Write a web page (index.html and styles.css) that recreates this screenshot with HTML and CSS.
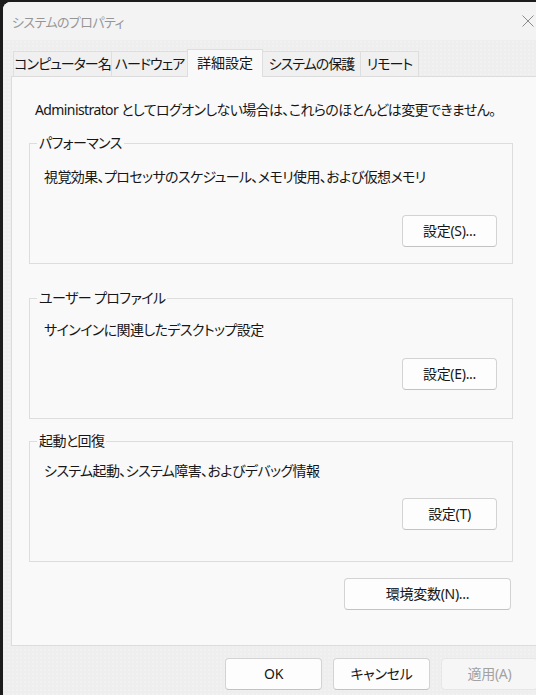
FILE: index.html
```html
<!DOCTYPE html>
<html lang="ja">
<head>
<meta charset="utf-8">
<title>システムのプロパティ</title>
<link rel="stylesheet" href="styles.css">
</head>
<body>
<div class="window">
  <div class="titlebar">
    <span class="title">システムのプロパティ</span>
    <span class="close" aria-label="閉じる">
      <svg width="12" height="12" viewBox="0 0 12 12"><path d="M0.5 0.5 L11.5 11.5 M11.5 0.5 L0.5 11.5" stroke="#8a8a8a" stroke-width="1" fill="none"/></svg>
    </span>
  </div>
  <div class="client">
    <div class="tabs">
      <div class="tab tab-computer">コンピューター名</div>
      <div class="tab tab-hardware">ハードウェア</div>
      <div class="tab tab-advanced selected">詳細設定</div>
      <div class="tab tab-protect">システムの保護</div>
      <div class="tab tab-remote">リモート</div>
    </div>
    <div class="panel">
      <p class="notice">Administrator としてログオンしない場合は、これらのほとんどは変更できません。</p>
      <fieldset class="group group-perf">
        <legend>パフォーマンス</legend>
        <p class="desc">視覚効果、プロセッサのスケジュール、メモリ使用、および仮想メモリ</p>
        <div class="row"><button class="btn btn-set">設定(S)...</button></div>
      </fieldset>
      <fieldset class="group group-user">
        <legend>ユーザー プロファイル</legend>
        <p class="desc">サインインに関連したデスクトップ設定</p>
        <div class="row"><button class="btn btn-set">設定(E)...</button></div>
      </fieldset>
      <fieldset class="group group-start">
        <legend>起動と回復</legend>
        <p class="desc">システム起動、システム障害、およびデバッグ情報</p>
        <div class="row"><button class="btn btn-set">設定(T)</button></div>
      </fieldset>
      <div class="env-row"><button class="btn btn-env">環境変数(N)...</button></div>
    </div>
    <div class="footer">
      <button class="btn btn-foot">OK</button>
      <button class="btn btn-foot">キャンセル</button>
      <button class="btn btn-foot disabled" disabled>適用(A)</button>
    </div>
  </div>
</div>
</body>
</html>
```
FILE: styles.css
```css
html, body {
  margin: 0;
  padding: 0;
  overflow: hidden;
  width: 536px;
  height: 695px;
}
body {
  background: #1c1c1c;
  font-family: "Noto Sans", "Noto Sans CJK JP", sans-serif;
  font-size: 14px;
  color: #161616;
  font-feature-settings: "palt";
  letter-spacing: -0.6px;
}
.window {
  margin: 2px 0 0 3px;
  width: 548px;
  height: 700px;
  border-radius: 8px 0 0 0;
  overflow: hidden;
  background: #f3f3f3;
  display: flex;
  flex-direction: column;
  box-shadow: inset 1px 1px 0 #d8d8d8;
}
.titlebar {
  height: 38px;
  flex: none;
  display: flex;
  align-items: center;
  justify-content: space-between;
  padding: 0 0 0 9px;
  background: #f3f3f3;
}
.title {
  font-size: 13px;
  color: #969696;
  line-height: 18px;
  margin-top: 1px;
  letter-spacing: -0.6px;
}
.close {
  display: flex;
  width: 12px;
  height: 12px;
  margin-right: 17px;
}
.client {
  flex: 1;
  background-color: #eeeeee;
  background-image: radial-gradient(circle, #f3f3f3 0.6px, transparent 0.9px);
  background-size: 4px 4px;
  padding: 0 0 0 8px;
}
.tabs {
  display: flex;
  align-items: flex-end;
  padding-left: 2px;
  margin-top: 9px;
  height: 27px;
  position: relative;
  z-index: 1;
}
.tab {
  height: 25px;
  box-sizing: border-box;
  border: 1px solid #dedede;
  border-bottom: none;
  margin-right: -1px;
  background: #f0f0f0;
  line-height: 23px;
  text-align: center;
  white-space: nowrap;
  font-size: 14px;
  letter-spacing: -1px;
  overflow: hidden;
}
.tab-computer { width: 99px; }
.tab-hardware { width: 77px; }
.tab-advanced { width: 76px; }
.tab-protect { width: 99px; }
.tab-remote { width: 59px; }
.tab.selected {
  height: 28px;
  margin-bottom: -1px;
  background: #f9f9f9;
  line-height: 26px;
  letter-spacing: 0;
}
.panel {
  box-sizing: border-box;
  height: 570px;
  width: 540px;
  border: 1px solid #dcdcdc;
  background: #f9f9f9;
  padding: 24px 0 0 17px;
}
.notice {
  margin: 0 0 0 6px;
  line-height: 18px;
  white-space: nowrap;
}
.group {
  width: 484px;
  box-sizing: border-box;
  border: 1px solid #dddddd;
  margin: 15px 0 0 0;
  padding: 0 15px 0 14px;
  min-width: 0;
}
.group legend {
  padding: 0 2px;
  margin-left: -7px;
  line-height: 18px;
  font-size: 14px;
}
.desc {
  margin: 0;
  line-height: 18px;
  white-space: nowrap;
}
.row {
  display: flex;
  justify-content: flex-end;
}
.group-perf .desc { margin-top: 16px; }
.group-perf .row { margin-top: 29px; padding-bottom: 16px; }
.group-user { margin-top: 25px; }
.group-user .desc { margin-top: 14px; }
.group-user .row { margin-top: 19px; padding-bottom: 28px; }
.group-start { margin-top: 13px; }
.group-start .desc { margin-top: 12px; }
.group-start .row { margin-top: 18px; padding-bottom: 31px; }
.btn {
  font-family: inherit;
  font-size: 14px;
  letter-spacing: -0.3px;
  color: #161616;
  background: #fdfdfd;
  border: 1px solid #d3d3d3;
  border-bottom-color: #c2c2c2;
  border-radius: 4px;
  height: 32px;
  padding: 0;
  line-height: 30px;
  font-feature-settings: "palt";
}
.btn-set {
  width: 95px;
}
.env-row {
  width: 482px;
  display: flex;
  justify-content: flex-end;
  margin-top: 16px;
}
.btn-env {
  width: 167px;
}
.footer {
  display: flex;
  justify-content: flex-end;
  gap: 11px;
  margin-top: 12px;
  padding-right: 13px;
}
.btn-foot {
  width: 97px;
}
.btn.disabled {
  color: #a2a2a2;
  background: #f6f6f6;
  border-color: #e6e6e6;
}
```
